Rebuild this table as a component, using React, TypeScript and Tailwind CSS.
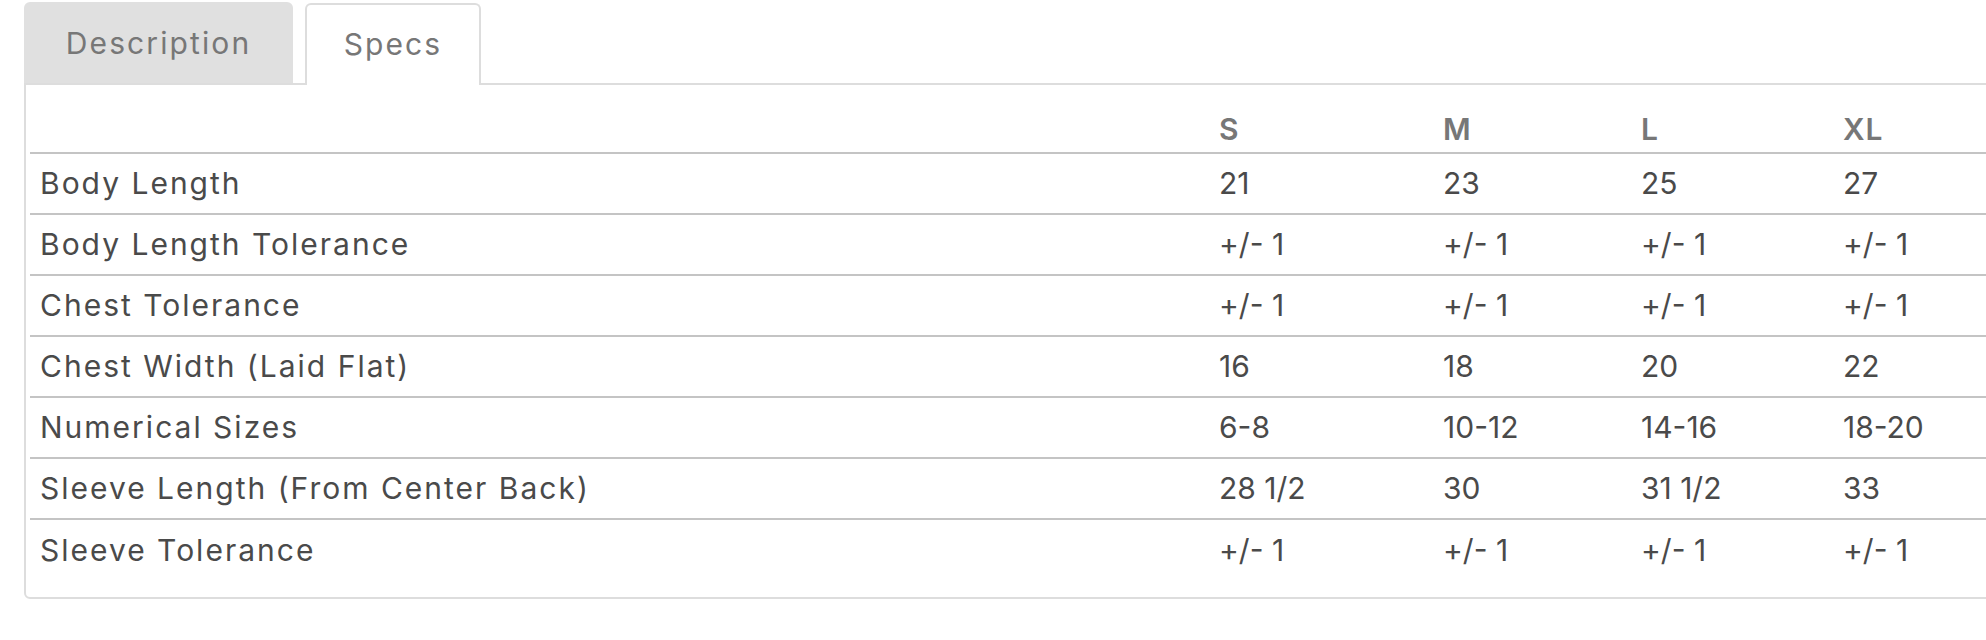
const sizes = ['S', 'M', 'L', 'XL'];

const specs: { label: string; values: string[] }[] = [
  { label: 'Body Length', values: ['21', '23', '25', '27'] },
  { label: 'Body Length Tolerance', values: ['+/- 1', '+/- 1', '+/- 1', '+/- 1'] },
  { label: 'Chest Tolerance', values: ['+/- 1', '+/- 1', '+/- 1', '+/- 1'] },
  { label: 'Chest Width (Laid Flat)', values: ['16', '18', '20', '22'] },
  { label: 'Numerical Sizes', values: ['6-8', '10-12', '14-16', '18-20'] },
  { label: 'Sleeve Length (From Center Back)', values: ['28 1/2', '30', '31 1/2', '33'] },
  { label: 'Sleeve Tolerance', values: ['+/- 1', '+/- 1', '+/- 1', '+/- 1'] },
];

const rowGrid = 'grid grid-cols-[1177px_224px_198px_202px_300px]';

export default function App() {
  return (
    <div className="w-[1986px] h-[640px] overflow-hidden bg-white font-['Inter',sans-serif] pl-[24px] pt-[2px]">
      {/* tabs */}
      <div className="flex items-start gap-[12px] text-[30px] tracking-[2.1px] text-[#777]">
        <div className="h-[81px] w-[269px] flex items-center justify-center pt-[1px] rounded-t-md bg-[#e0e0e0]">
          Description
        </div>
        <div className="relative z-10 -mb-[2px] mt-[1px] h-[82px] w-[176px] flex items-center justify-center pb-[2px] rounded-t-md border-2 border-b-0 border-[#ddd] bg-white">
          Specs
        </div>
      </div>

      {/* panel */}
      <div className="w-[2100px] border-2 border-[#ddd] rounded-b-md px-[4px] pb-[16px]">
        <div className={`${rowGrid} h-[69px] border-b-2 border-[#c4c4c4] text-[30px] leading-[36px] font-semibold tracking-[1px] text-[#777]`}>
          <div />
          {sizes.map((s) => (
            <div key={s} className="flex items-end pl-[12px] pb-[5px]">
              {s}
            </div>
          ))}
        </div>
        {specs.map((row, i) => (
          <div
            key={row.label}
            className={`${rowGrid} h-[61px] text-[30px] text-[#4a4a4a] ${
              i < specs.length - 1 ? 'border-b-2 border-[#c4c4c4]' : 'h-[59px]'
            }`}
          >
            <div className="flex items-center pl-[10px] tracking-[2px]">{row.label}</div>
            {row.values.map((v, j) => (
              <div key={j} className="flex items-center pl-[12px]">
                {v}
              </div>
            ))}
          </div>
        ))}
      </div>
    </div>
  );
}
